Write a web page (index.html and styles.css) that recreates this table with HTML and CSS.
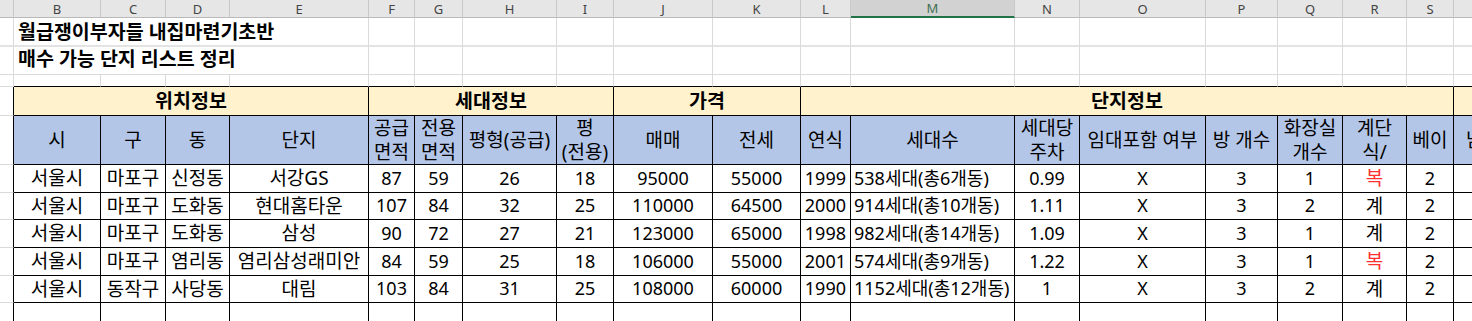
FILE: index.html
```html
<!DOCTYPE html>
<html lang="ko">
<head>
<meta charset="utf-8">
<title>매수 가능 단지 리스트</title>
<link rel="stylesheet" href="styles.css">
</head>
<body>
<div class="viewport">
<div class="sheet">
  <!-- column headers -->
  <div class="ch"></div>
  <div class="ch">B</div><div class="ch">C</div><div class="ch">D</div><div class="ch">E</div>
  <div class="ch">F</div><div class="ch">G</div><div class="ch">H</div><div class="ch">I</div>
  <div class="ch">J</div><div class="ch">K</div><div class="ch">L</div><div class="ch sel">M</div>
  <div class="ch">N</div><div class="ch">O</div><div class="ch">P</div><div class="ch">Q</div>
  <div class="ch">R</div><div class="ch">S</div><div class="ch">T</div>

  <!-- row 1 -->
  <div class="c r1"></div>
  <div class="c r1 title span4">월급쟁이부자들 내집마련기초반</div>
  <div class="c r1"></div><div class="c r1"></div><div class="c r1"></div><div class="c r1"></div>
  <div class="c r1"></div><div class="c r1"></div><div class="c r1"></div><div class="c r1"></div>
  <div class="c r1"></div><div class="c r1"></div><div class="c r1"></div><div class="c r1"></div>
  <div class="c r1"></div><div class="c r1"></div><div class="c r1"></div>

  <!-- row 2 -->
  <div class="c"></div>
  <div class="c title title2 span4">매수 가능 단지 리스트 정리</div>
  <div class="c"></div><div class="c"></div><div class="c"></div><div class="c"></div>
  <div class="c"></div><div class="c"></div><div class="c"></div><div class="c"></div>
  <div class="c"></div><div class="c"></div><div class="c"></div><div class="c"></div>
  <div class="c"></div><div class="c"></div><div class="c"></div>

  <!-- row 3 (spacer) -->
  <div class="c"></div>
  <div class="c top"></div><div class="c top"></div><div class="c top"></div><div class="c top"></div>
  <div class="c top"></div><div class="c top"></div><div class="c top"></div><div class="c top"></div>
  <div class="c top"></div><div class="c top"></div><div class="c top"></div><div class="c top"></div>
  <div class="c top"></div><div class="c top"></div><div class="c top"></div><div class="c top"></div>
  <div class="c top"></div><div class="c top"></div><div class="c top"></div>

  <!-- row 4 group headers -->
  <div class="c edge"></div>
  <div class="c t grp span4">위치정보</div>
  <div class="c t grp span4">세대정보</div>
  <div class="c t grp span2">가격</div>
  <div class="c t grp span8">단지정보</div>
  <div class="c t grp"></div>

  <!-- row 5 headers -->
  <div class="c edge"></div>
  <div class="c t hd">시</div>
  <div class="c t hd">구</div>
  <div class="c t hd">동</div>
  <div class="c t hd">단지</div>
  <div class="c t hd two">공급<br>면적</div>
  <div class="c t hd two">전용<br>면적</div>
  <div class="c t hd">평형(공급)</div>
  <div class="c t hd two">평<br>(전용)</div>
  <div class="c t hd">매매</div>
  <div class="c t hd">전세</div>
  <div class="c t hd">연식</div>
  <div class="c t hd">세대수</div>
  <div class="c t hd two">세대당<br>주차</div>
  <div class="c t hd">임대포함 여부</div>
  <div class="c t hd">방 개수</div>
  <div class="c t hd two">화장실<br>개수</div>
  <div class="c t hd two">계단<br>식/</div>
  <div class="c t hd">베이</div>
  <div class="c t hd">남향</div>

  <!-- data rows -->
  <div class="c edge"></div>
  <div class="c t">서울시</div><div class="c t">마포구</div><div class="c t">신정동</div><div class="c t">서강GS</div>
  <div class="c t n">87</div><div class="c t n">59</div><div class="c t n">26</div><div class="c t n">18</div>
  <div class="c t n">95000</div><div class="c t n">55000</div><div class="c t n right">1999</div><div class="c t n left">538세대(총6개동)</div>
  <div class="c t n">0.99</div><div class="c t n">X</div><div class="c t n">3</div><div class="c t n">1</div>
  <div class="c t red">복</div><div class="c t n">2</div><div class="c t"></div>

  <div class="c edge"></div>
  <div class="c t">서울시</div><div class="c t">마포구</div><div class="c t">도화동</div><div class="c t">현대홈타운</div>
  <div class="c t n">107</div><div class="c t n">84</div><div class="c t n">32</div><div class="c t n">25</div>
  <div class="c t n">110000</div><div class="c t n">64500</div><div class="c t n right">2000</div><div class="c t n left">914세대(총10개동)</div>
  <div class="c t n">1.11</div><div class="c t n">X</div><div class="c t n">3</div><div class="c t n">2</div>
  <div class="c t">계</div><div class="c t n">2</div><div class="c t"></div>

  <div class="c edge"></div>
  <div class="c t">서울시</div><div class="c t">마포구</div><div class="c t">도화동</div><div class="c t">삼성</div>
  <div class="c t n">90</div><div class="c t n">72</div><div class="c t n">27</div><div class="c t n">21</div>
  <div class="c t n">123000</div><div class="c t n">65000</div><div class="c t n right">1998</div><div class="c t n left">982세대(총14개동)</div>
  <div class="c t n">1.09</div><div class="c t n">X</div><div class="c t n">3</div><div class="c t n">1</div>
  <div class="c t">계</div><div class="c t n">2</div><div class="c t"></div>

  <div class="c edge"></div>
  <div class="c t">서울시</div><div class="c t">마포구</div><div class="c t">염리동</div><div class="c t">염리삼성래미안</div>
  <div class="c t n">84</div><div class="c t n">59</div><div class="c t n">25</div><div class="c t n">18</div>
  <div class="c t n">106000</div><div class="c t n">55000</div><div class="c t n right">2001</div><div class="c t n left">574세대(총9개동)</div>
  <div class="c t n">1.22</div><div class="c t n">X</div><div class="c t n">3</div><div class="c t n">1</div>
  <div class="c t red">복</div><div class="c t n">2</div><div class="c t"></div>

  <div class="c edge"></div>
  <div class="c t">서울시</div><div class="c t">동작구</div><div class="c t">사당동</div><div class="c t">대림</div>
  <div class="c t n">103</div><div class="c t n">84</div><div class="c t n">31</div><div class="c t n">25</div>
  <div class="c t n">108000</div><div class="c t n">60000</div><div class="c t n right">1990</div><div class="c t n left">1152세대(총12개동)</div>
  <div class="c t n">1</div><div class="c t n">X</div><div class="c t n">3</div><div class="c t n">2</div>
  <div class="c t">계</div><div class="c t n">2</div><div class="c t"></div>

  <!-- blank row -->
  <div class="c edge"></div>
  <div class="c t"></div><div class="c t"></div><div class="c t"></div><div class="c t"></div>
  <div class="c t"></div><div class="c t"></div><div class="c t"></div><div class="c t"></div>
  <div class="c t"></div><div class="c t"></div><div class="c t"></div><div class="c t"></div>
  <div class="c t"></div><div class="c t"></div><div class="c t"></div><div class="c t"></div>
  <div class="c t"></div><div class="c t"></div><div class="c t"></div>
</div>
</div>
</body>
</html>
```

FILE: styles.css
```css
* { box-sizing: border-box; }

html, body {
  margin: 0;
  padding: 0;
  background: #ffffff;
}

.viewport {
  width: 1472px;
  height: 321px;
  overflow: hidden;
}

.sheet {
  display: grid;
  grid-template-columns: 14px 87px 65px 64px 139px 46px 48px 94px 57px 99px 88px 50px 164px 65px 126px 72px 65px 64px 47px 60px;
  grid-template-rows: 18px 29px 28px 12px 29px 49px 28px 27px 28px 28px 27px 30px;
  width: 1514px;
  font-family: "Noto Sans", "Noto Sans CJK KR", sans-serif;
  font-size: 19px;
  color: #000;
}

/* column header band */
.ch {
  background: #e6e6e6;
  border-right: 1px solid #c9c9c9;
  border-bottom: 1px solid #b9b9b9;
  color: #444;
  font-size: 13px;
  line-height: 16px;
  display: flex;
  align-items: center;
  justify-content: center;
}
.ch.sel {
  background: #d2d2d2;
  border-bottom: 2px solid #217346;
  color: #3d6e50;
  align-items: flex-start;
}

/* generic cell */
.c {
  border-right: 1px solid #dadada;
  border-bottom: 1px solid #dadada;
  display: flex;
  align-items: center;
  justify-content: center;
  white-space: nowrap;
  overflow: hidden;
  line-height: 1.2;
  min-width: 0;
}

.r1 { border-bottom: 2px solid #e3e3e3; }

.title {
  justify-content: flex-start;
  padding-left: 4px;
  font-weight: 700;
  font-size: 19.5px;
  overflow: visible;
}
.title2 { padding-bottom: 3px; }

.span2 { grid-column: span 2; }
.span4 { grid-column: span 4; }
.span8 { grid-column: span 8; }

.top { border-bottom-color: #000; }
.edge { border-right-color: #000; }

/* table cells */
.t {
  border-right-color: #000;
  border-bottom-color: #000;
}

.n { font-size: 18px; }

.grp {
  background: #fff2cc;
  font-weight: 700;
  font-size: 19.5px;
}

.hd {
  background: #b4c6e7;
}
.hd.two {
  text-align: center;
  line-height: 24px;
}

.right {
  justify-content: flex-end;
  padding-right: 4px;
}
.left {
  justify-content: flex-start;
  padding-left: 3px;
  overflow: visible;
}
.red { color: #ff3030; }
```
